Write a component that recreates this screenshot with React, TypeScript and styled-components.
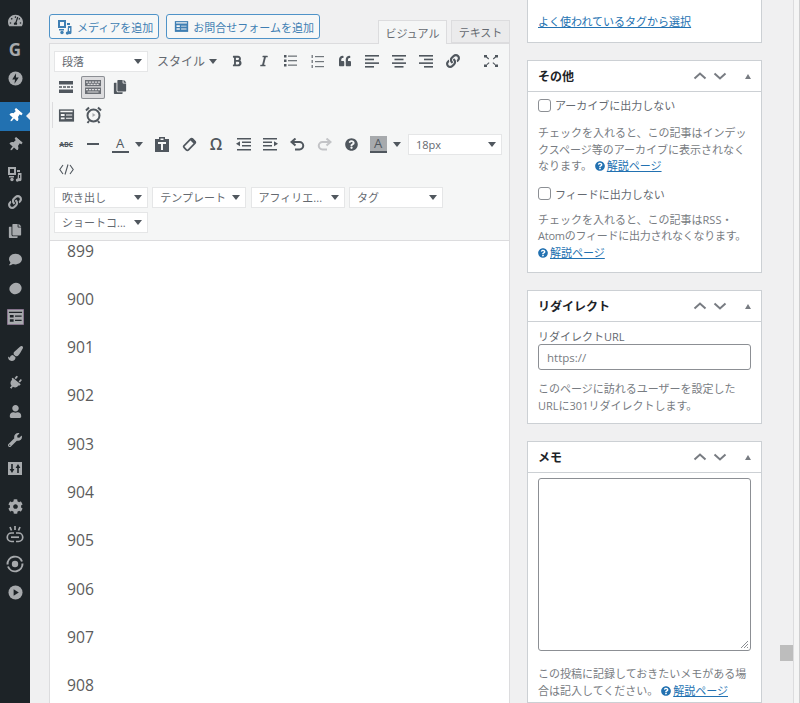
import React from 'react';
import styled, { createGlobalStyle } from 'styled-components';
import {
  FaTachometerAlt,
  FaThumbtack,
  FaLink,
  FaCopy,
  FaComment,
  FaPaintBrush,
  FaPlug,
  FaUser,
  FaWrench,
  FaCog,
  FaBold,
  FaItalic,
  FaQuoteLeft,
  FaQuestionCircle,
} from 'react-icons/fa';

const GlobalStyle = createGlobalStyle`
  html, body {
    margin: 0;
    height: 100%;
    overflow: hidden;
    background: #f0f0f1;
  }
  * {
    box-sizing: border-box;
  }
  body {
    font-family: "Open Sans", "Noto Sans CJK JP", sans-serif;
    font-size: 11px;
    color: #50575e;
  }
`;

const Page = styled.div`
  display: flex;
  height: 703px;
  overflow: hidden;
  position: relative;
`;

/* ---------- admin menu ---------- */

const Sidebar = styled.nav`
  flex: 0 0 30px;
  background: #1d2327;
  padding-top: 6.5px;
  color: #a7aaad;
`;

const MenuGroup = styled.div<{ $gap?: number }>`
  margin-top: ${p => p.$gap ?? 0}px;
`;

const MenuItem = styled.div<{ $active?: boolean }>`
  position: relative;
  height: 28.7px;
  display: flex;
  align-items: center;
  justify-content: center;
  background: ${p => (p.$active ? '#2271b1' : 'transparent')};
  color: ${p => (p.$active ? '#fff' : '#a7aaad')};
  font-size: 14px;

  ${p =>
    p.$active &&
    `
    &::after {
      content: '';
      position: absolute;
      right: 0;
      top: 10px;
      border: 4px solid transparent;
      border-right-color: #f0f0f1;
      border-left-width: 0;
    }
  `}
`;

const LogoLetter = styled.span`
  font-weight: 700;
  font-size: 17px;
  line-height: 1;
`;

const Tilted = styled.span`
  display: flex;
  transform: rotate(40deg);
`;

const MediaSvg = () => (
  <svg width="16" height="16" viewBox="0 0 16 16" fill="currentColor">
    <path d="M1 1h8v8H1zM3 3v4h4V3z" fillRule="evenodd" />
    <path d="M10 4h3v2h-3zM2 10h5v1.5H2z" />
    <path d="M11 7h3.5v6.5a1.6 1.6 0 1 1-1.4-1.5V9H12v5a1.6 1.6 0 1 1-1.4-1.5z" />
    <circle cx="5" cy="13.5" r="1.7" />
  </svg>
);

const BoltCircle = () => (
  <svg width="15" height="15" viewBox="0 0 16 16">
    <circle cx="8" cy="8" r="7.5" fill="currentColor" />
    <path d="M8.6 2.5 4.5 9h3l-.6 4.5L11.5 7h-3z" fill="#1d2327" />
  </svg>
);

const FormSvg = ({ size = 17 }: { size?: number }) => (
  <svg width={size} height={size} viewBox="0 0 18 18">
    <path d="M1 2.5h16v13H1z" fill="currentColor" />
    <path d="M2.5 4v1.5h13V4zM3 7.5v2h4v-2zM3 11v2h4v-2zM8.5 8v1h6.5V8zM8.5 11.5v1h6.5v-1z" fill="#f5f6f6" />
  </svg>
);

const MenuFormSvg = () => (
  <svg width="17" height="16" viewBox="0 0 18 17">
    <path d="M.5.5h17v16H.5z" fill="#a7aaad" stroke="#8a7590" />
    <path d="M2 3h14v1.2H2zM3 6.5h4V9H3zM3 11h4v2.5H3zM8.5 7h7v1.3h-7zM8.5 11.5h7v1.3h-7z" fill="#1d2327" />
  </svg>
);

const SlidersSvg = () => (
  <svg width="14" height="13" viewBox="0 0 14 13">
    <path d="M0 0h14v13H0z" fill="#a7aaad" />
    <path d="M3.2 2v5H1.6L4 11l2.4-4H4.8V2zM9.2 11V6H7.6L10 2l2.4 4h-1.6v5z" fill="#1d2327" />
  </svg>
);

const CouponSvg = () => (
  <svg width="18" height="20" viewBox="0 0 18 20" fill="none" stroke="currentColor" strokeWidth="1.7">
    <path d="M9 1v4M4 2l1.5 3.5M14 2l-1.5 3.5" />
    <path d="M8 8H5.5a4.2 4.2 0 0 0 0 8.5H8M10 8h2.5a4.2 4.2 0 0 1 0 8.5H10" />
    <path d="M5 12.2h8" />
  </svg>
);

const SwirlSvg = () => (
  <svg width="18" height="18" viewBox="0 0 18 18" fill="none" stroke="currentColor">
    <circle cx="9" cy="9" r="3.2" fill="currentColor" stroke="none" />
    <path d="M1.5 9.5A7.5 7.5 0 0 1 16 6.5" strokeWidth="2" />
    <path d="M16.5 8.5A7.5 7.5 0 0 1 2 11.5" strokeWidth="2" />
  </svg>
);

const PlaySvg = () => (
  <svg width="15" height="15" viewBox="0 0 16 16">
    <circle cx="8" cy="8" r="7.5" fill="currentColor" />
    <path d="M6 4.5v7L11.5 8z" fill="#1d2327" />
  </svg>
);

const menuGroups: { gap: number; items: { key: string; icon: React.ReactNode; active?: boolean }[] }[] = [
  {
    gap: 0,
    items: [
      { key: 'dash', icon: <FaTachometerAlt size={15} /> },
      { key: 'g', icon: <LogoLetter>G</LogoLetter> },
      { key: 'bolt', icon: <BoltCircle /> },
    ],
  },
  {
    gap: 9.5,
    items: [
      { key: 'posts', active: true, icon: <Tilted><FaThumbtack size={14} /></Tilted> },
      { key: 'pin', icon: <Tilted><FaThumbtack size={14} /></Tilted> },
      { key: 'media', icon: <MediaSvg /> },
      { key: 'link', icon: <FaLink size={14} /> },
      { key: 'pages', icon: <FaCopy size={14} /> },
      { key: 'comments', icon: <FaComment size={13} /> },
      {
        key: 'circle',
        icon: (
          <svg width="13" height="13" viewBox="0 0 13 13">
            <ellipse cx="6.5" cy="6.5" rx="6.2" ry="5.6" transform="rotate(-25 6.5 6.5)" fill="currentColor" />
          </svg>
        ),
      },
      { key: 'form', icon: <MenuFormSvg /> },
    ],
  },
  {
    gap: 8,
    items: [
      { key: 'brush', icon: <FaPaintBrush size={15} /> },
      { key: 'plug', icon: <Tilted><FaPlug size={14} /></Tilted> },
      { key: 'user', icon: <FaUser size={13} /> },
      { key: 'wrench', icon: <FaWrench size={14} /> },
      { key: 'sliders', icon: <SlidersSvg /> },
    ],
  },
  {
    gap: 9,
    items: [
      { key: 'cog', icon: <FaCog size={15} /> },
      { key: 'coupon', icon: <CouponSvg /> },
      { key: 'swirl', icon: <SwirlSvg /> },
      { key: 'play', icon: <PlaySvg /> },
    ],
  },
];

/* ---------- editor ---------- */

const EditorColumn = styled.main`
  flex: 0 0 461px;
  margin-left: 19px;
  display: flex;
  flex-direction: column;
`;

const EditorTop = styled.div`
  display: flex;
  align-items: flex-start;
  height: 43px;
  padding-top: 14px;
  gap: 7px;
`;

const MediaButton = styled.button`
  height: 25px;
  display: flex;
  align-items: center;
  gap: 4px;
  padding: 0 5px 0 7px;
  font: inherit;
  font-size: 11px;
  color: #3f7fb3;
  background: #f6f7f7;
  border: 1px solid #4f93c8;
  border-radius: 3px;
`;

const Tabs = styled.div`
  margin-left: auto;
  display: flex;
  align-items: flex-end;
  gap: 4px;
  height: 30px;
  margin-top: -1px;
`;

const Tab = styled.div<{ $active?: boolean }>`
  height: ${p => (p.$active ? 24 : 23)}px;
  width: ${p => (p.$active ? 69 : 59)}px;
  display: flex;
  align-items: center;
  justify-content: center;
  font-size: 11px;
  color: #646970;
  background: ${p => (p.$active ? '#f5f6f6' : '#ebebec')};
  border: 1px solid #dcdcde;
  border-bottom: ${p => (p.$active ? 'none' : '1px solid #dcdcde')};
  position: relative;
  z-index: 1;
  margin-bottom: ${p => (p.$active ? -1 : 0)}px;
`;

const Toolbar = styled.div`
  background: #f5f6f6;
  border: 1px solid #dcdcde;
  padding: 4px 5px 5px 2.5px;
`;

const ToolGroup = styled.div<{ $mt?: number; $rule?: boolean }>`
  margin-top: ${p => p.$mt ?? 0}px;
  ${p => p.$rule && 'box-shadow: -1px 0 0 #dcdcde;'}
`;

const ToolRow = styled.div<{ $h?: number; $gap?: number }>`
  display: flex;
  align-items: center;
  height: ${p => p.$h ?? 26}px;
  gap: ${p => p.$gap ?? 0}px;
`;

const ToolButton = styled.div<{ $pressed?: boolean; $disabled?: boolean; $end?: boolean }>`
  flex: 0 0 27px;
  height: 23px;
  display: flex;
  align-items: center;
  justify-content: center;
  color: ${p => (p.$disabled ? '#c3c4c7' : '#50575e')};
  border-radius: 2px;
  ${p => p.$end && 'margin-left: auto;'}
  ${p =>
    p.$pressed &&
    `
    background: #dcdcde;
    box-shadow: inset 0 0 0 1px #8c8f94;
    flex-basis: 24px;
    margin: 0 1.5px;
  `}
`;

const Caret = styled.span`
  width: 0;
  height: 0;
  border: 4px solid transparent;
  border-top: 5px solid #50575e;
  border-bottom: 0;
`;

const CaretButton = styled.div`
  flex: 0 0 15px;
  display: flex;
  align-items: center;
  justify-content: flex-start;
  padding-left: 1px;
`;

const Select = styled.div`
  flex: 0 0 94px;
  height: 21px;
  margin-left: 1.5px;
  display: flex;
  align-items: center;
  justify-content: space-between;
  padding: 0 5px 0 7px;
  background: #fff;
  border: 1px solid #e5e6e7;
  font-size: 11px;
  color: #646970;
  white-space: nowrap;
`;

const StyleMenu = styled.div`
  flex: 0 0 75px;
  display: flex;
  align-items: center;
  gap: 4px;
  padding-left: 9px;
  font-size: 12px;
  color: #646970;
`;

const Omega = styled.span`
  font-size: 16px;
  font-weight: 600;
  line-height: 1;
`;

const ColorA = styled.span<{ $fill?: boolean }>`
  width: 17px;
  height: 17px;
  display: flex;
  align-items: center;
  justify-content: center;
  font-size: 13px;
  line-height: 1;
  color: #50575e;
  background: ${p => (p.$fill ? '#a7aaad' : 'transparent')};
  border-bottom: 2px solid #50575e;
`;

const Abc = styled.span`
  font-size: 7px;
  font-weight: 700;
  letter-spacing: -0.2px;
  text-decoration: line-through;
`;

const Lines = ({ rows }: { rows: [number, number][] }) => (
  <svg width="14" height="13" viewBox="0 0 14 13" fill="currentColor">
    {rows.map(([x, w], i) => (
      <rect key={i} x={x} y={i * (11 / (rows.length - 1))} width={w} height="1.6" />
    ))}
  </svg>
);

const UlIcon = () => (
  <svg width="13" height="12" viewBox="0 0 13 12" fill="currentColor">
    {[0, 4.5, 9].map(y => (
      <g key={y}>
        <rect x="0" y={y} width="2.5" height="2.5" />
        <rect x="4" y={y + 0.5} width="9" height="1.3" opacity=".8" />
      </g>
    ))}
  </svg>
);

const OlIcon = () => (
  <svg width="13" height="13" viewBox="0 0 13 13" fill="currentColor">
    {[0, 5, 10].map(y => (
      <g key={y}>
        <rect x="0.5" y={y} width="1.5" height="3" opacity=".7" />
        <rect x="4" y={y + 1} width="9" height="1.2" opacity=".8" />
      </g>
    ))}
  </svg>
);

const FullscreenIcon = () => (
  <svg width="14" height="12" viewBox="0 0 14 12" fill="none" stroke="currentColor">
    <path d="M2.5 2 11.5 10M11.5 2 2.5 10" strokeWidth="1.1" strokeDasharray="3 5.5" />
    <path d="M0 0h3v2.5H0zM11 0h3v2.5h-3zM0 9.5h3V12H0zM11 9.5h3V12h-3z" fill="currentColor" stroke="none" />
  </svg>
);

const MoreIcon = () => (
  <svg width="14" height="12" viewBox="0 0 14 12" fill="currentColor">
    <path d="M0 0h14v3.5H0zM0 8.5h14V12H0zM0 5.3h3v1.4H0zM4 5.3h3v1.4H4zM8 5.3h3v1.4H8zM12 5.3h2v1.4h-2z" />
  </svg>
);

const KeyboardIcon = () => (
  <svg width="16" height="14" viewBox="0 0 16 14" fill="#6b6f75">
    <path d="M0 0h16v6.3H0zM0 7.5h16V14H0z" />
    <path
      d="M1 1.5h2.2v1.2H1zM4 1.5h2.2v1.2H4zM7 1.5h2.2v1.2H7zM10 1.5h2.2v1.2H10zM13 1.5h2v1.2h-2zM2.500 3.800h2.200V5H2.500zM5.500 3.800h2.200V5H5.500zM8.500 3.800h2.200V5H8.500zM11.500 3.800h2.200V5h-2.200zM1 9h2.200v1.200H1zM4 9h2.200v1.200H4zM7 9h2.200v1.200H7zM10 9h2.200v1.200H10zM13 9h2v1.200h-2zM2.500 11.400h11v1.200h-11z"
      fill="#dcdcde"
    />
  </svg>
);

const ClockIcon = () => (
  <svg width="17" height="18" viewBox="0 0 17 18" fill="none" stroke="currentColor">
    <circle cx="8.5" cy="9.5" r="6" strokeWidth="2" />
    <path d="M1 4.5 4 1.5M16 4.5l-3-3M4 15l-1.5 2M13 15l1.5 2" strokeWidth="2" />
    <path d="M7.5 7v4l3-2z" fill="#a7aaad" stroke="none" />
  </svg>
);

const ClipboardIcon = () => (
  <svg width="14" height="15" viewBox="0 0 14 15" fill="currentColor">
    <path d="M0 2h4V0h6v2h4v13H0zM5.5 1.5V3h3V1.5zM3 5v2h3v6h2V7h3V5z" fillRule="evenodd" />
  </svg>
);

const EraserIcon = () => (
  <svg width="15" height="15" viewBox="0 0 15 15" fill="none" stroke="currentColor">
    <rect x="1.5" y="4.5" width="12" height="6" rx="1.5" transform="rotate(-45 7.5 7.5)" strokeWidth="1.7" />
    <path d="M8 3 12 7l1.2-1.5a1 1 0 0 0 0-1.5L11 1.8a1 1 0 0 0-1.5 0z" fill="currentColor" stroke="none" />
  </svg>
);

const OutdentIcon = () => (
  <svg width="15" height="13" viewBox="0 0 15 13" fill="currentColor">
    <path d="M1 0h14v1.400H1zM6 3.500h9v1.400H6zM6 7h9v1.400H6zM1 11h14v1.400H1z" />
    <path d="M0 5.800 4 3.300v5z" />
  </svg>
);

const IndentIcon = () => (
  <svg width="15" height="13" viewBox="0 0 15 13" fill="currentColor">
    <path d="M0 0h14v1.400H0zM0 3.500h9v1.400H0zM0 7h9v1.400H0zM0 11h14v1.400H0z" />
    <path d="M15 5.800 11 3.300v5z" />
  </svg>
);

const UndoIcon = ({ flip }: { flip?: boolean }) => (
  <svg
    width="15"
    height="13"
    viewBox="0 0 15 13"
    fill="none"
    stroke="currentColor"
    strokeWidth="2"
    style={flip ? { transform: 'scaleX(-1)' } : undefined}
  >
    <path d="M2 4h7.5a3.7 3.7 0 0 1 0 7.5H5" />
    <path d="M5.5 .5 1.5 4l4 3.5" />
  </svg>
);

const CodeIcon = () => (
  <svg width="15" height="11" viewBox="0 0 15 11" fill="none" stroke="currentColor" strokeWidth="1.1">
    <path d="M4 1 .8 5.5 4 10M11 1l3.2 4.5L11 10M9 .5 6 10.5" />
  </svg>
);

const HelpDot = styled(FaQuestionCircle)`
  color: #2271b1;
  vertical-align: -1px;
`;

const EditorBody = styled.div`
  flex: 1;
  min-height: 0;
  overflow: hidden;
  background: #fff;
  border-left: 1px solid #dcdcde;
  border-right: 1px solid #dcdcde;
  padding-left: 17px;
`;

const Line = styled.p`
  margin: 0 0 21.33px;
  font-size: 15.7px;
  line-height: 27px;
  color: #5c5c5c;
  &:first-child {
    margin-top: -3px;
  }
`;

/* ---------- side boxes ---------- */

const SideColumn = styled.aside`
  flex: 0 0 235px;
  margin-left: 17px;
  display: flex;
  flex-direction: column;
  gap: 17px;
`;

const Box = styled.section<{ $grow?: boolean }>`
  background: #fff;
  border: 1px solid #ccd0d4;
  ${p => p.$grow && 'flex: 1;'}
`;

const TopBox = styled(Box)`
  height: 43px;
  border-top: none;
  padding: 13px 10px 0;
`;

const BoxHeader = styled.header`
  height: 31px;
  display: flex;
  align-items: center;
  padding: 0 10px;
  border-bottom: 1px solid #ccd0d4;
`;

const BoxTitle = styled.h2`
  margin: 0;
  flex: 1;
  font-size: 12px;
  font-weight: 700;
  color: #1d2327;
`;

const HeaderTools = styled.div`
  display: flex;
  align-items: center;
  color: #787c82;
`;

const ChevronSlot = styled.span`
  display: flex;
  margin-right: 6px;
`;

const SmallUp = styled.span`
  width: 0;
  height: 0;
  margin-left: 17.5px;
  margin-right: 0.5px;
  border: 3.5px solid transparent;
  border-bottom: 5px solid #787c82;
  border-top: 0;
`;

const Chevron = ({ down }: { down?: boolean }) => (
  <svg width="14" height="8" viewBox="0 0 14 8" fill="none" stroke="currentColor" strokeWidth="2">
    <path d={down ? 'M1.5 1.5 7 6.5l5.5-5' : 'M1.5 6.5 7 1.5l5.5 5'} />
  </svg>
);

const BoxBody = styled.div<{ $pt?: number; $pb?: number }>`
  padding: ${p => p.$pt ?? 6}px 10px ${p => p.$pb ?? 0}px;
`;

const CheckRow = styled.label<{ $mt?: number }>`
  display: flex;
  align-items: center;
  gap: 4px;
  height: 14px;
  margin-top: ${p => p.$mt ?? 0}px;
  font-size: 11px;
  color: #646970;
`;

const CheckBox = styled.span`
  flex: 0 0 13px;
  height: 13px;
  border: 1px solid #8c8f94;
  border-radius: 3px;
  background: #fff;
`;

const Note = styled.p<{ $mt?: number }>`
  margin: ${p => p.$mt ?? 0}px 0 0;
  font-size: 11px;
  line-height: 16.5px;
  color: #787c82;
`;

const TightLine = styled.span`
  white-space: nowrap;
  letter-spacing: -0.25px;
`;

const DocLink = styled.a`
  color: #2271b1;
  text-decoration: underline;
`;

const HelpText = styled(DocLink)`
  padding-left: 2px;
`;

const FieldLabel = styled.div`
  font-size: 11px;
  line-height: 14px;
  color: #646970;
`;

const TextField = styled.div`
  height: 26px;
  display: flex;
  align-items: center;
  padding-left: 8px;
  font-size: 11.5px;
  color: #787c82;
  border: 1px solid #8c8f94;
  border-radius: 3px;
`;

const MemoField = styled.div`
  position: relative;
  height: 173px;
  width: 213px;
  border: 1px solid #8c8f94;
  border-radius: 3px;
`;

const ResizeGrip = styled.svg`
  position: absolute;
  right: 1px;
  bottom: 1px;
`;

const ScrollRail = styled.div`
  flex: 1;
  position: relative;
  display: flex;
  justify-content: flex-end;
`;

const RailEdge = styled.div`
  width: 7px;
  background: #f5f5f5;
  border-left: 1px solid #dcdcde;
  border-right: 1px solid #cfcfd0;
`;

const RailThumb = styled.div`
  position: absolute;
  top: 645px;
  left: 18px;
  width: 13px;
  height: 16px;
  background: #bdbdbd;
`;

const HelpLink = () => (
  <>
    <HelpDot size={10} />
    <HelpText href="#">解説ページ</HelpText>
  </>
);

const BoxHead = ({ title }: { title: string }) => (
  <BoxHeader>
    <BoxTitle>{title}</BoxTitle>
    <HeaderTools>
      <ChevronSlot><Chevron /></ChevronSlot>
      <Chevron down />
      <SmallUp />
    </HeaderTools>
  </BoxHeader>
);

const numbers = [899, 900, 901, 902, 903, 904, 905, 906, 907, 908];

const App: React.FC = () => (
  <Page>
    <GlobalStyle />
    <Sidebar>
      {menuGroups.map(group => (
        <MenuGroup key={group.items[0].key} $gap={group.gap}>
          {group.items.map(item => (
            <MenuItem key={item.key} $active={item.active}>
              {item.icon}
            </MenuItem>
          ))}
        </MenuGroup>
      ))}
    </Sidebar>

    <EditorColumn>
      <EditorTop>
        <MediaButton>
          <MediaSvg />
          メディアを追加
        </MediaButton>
        <MediaButton>
          <FormSvg size={15} />
          お問合せフォームを追加
        </MediaButton>
        <Tabs>
          <Tab $active>ビジュアル</Tab>
          <Tab>テキスト</Tab>
        </Tabs>
      </EditorTop>

      <Toolbar>
        <ToolGroup>
          <ToolRow>
            <Select>段落<Caret /></Select>
            <StyleMenu>スタイル<Caret /></StyleMenu>
            <ToolButton><FaBold size={12} /></ToolButton>
            <ToolButton><FaItalic size={12} /></ToolButton>
            <ToolButton><UlIcon /></ToolButton>
            <ToolButton><OlIcon /></ToolButton>
            <ToolButton><FaQuoteLeft size={12} /></ToolButton>
            <ToolButton><Lines rows={[[0, 14], [0, 9], [0, 14], [0, 9]]} /></ToolButton>
            <ToolButton><Lines rows={[[0, 14], [2.5, 9], [0, 14], [2.5, 9]]} /></ToolButton>
            <ToolButton><Lines rows={[[0, 14], [5, 9], [0, 14], [5, 9]]} /></ToolButton>
            <ToolButton><FaLink size={14} /></ToolButton>
            <ToolButton $end><FullscreenIcon /></ToolButton>
          </ToolRow>
          <ToolRow>
            <ToolButton><MoreIcon /></ToolButton>
            <ToolButton $pressed><KeyboardIcon /></ToolButton>
            <ToolButton><FaCopy size={14} /></ToolButton>
          </ToolRow>
        </ToolGroup>

        <ToolGroup $mt={2} $rule>
          <ToolRow>
            <ToolButton><FormSvg /></ToolButton>
            <ToolButton><ClockIcon /></ToolButton>
          </ToolRow>
        </ToolGroup>

        <ToolGroup $mt={3.5}>
          <ToolRow $h={25}>
            <ToolButton><Abc>ABC</Abc></ToolButton>
            <ToolButton><svg width="12" height="2"><rect width="12" height="2" fill="currentColor" /></svg></ToolButton>
            <ToolButton><ColorA>A</ColorA></ToolButton>
            <CaretButton><Caret /></CaretButton>
            <ToolButton><ClipboardIcon /></ToolButton>
            <ToolButton><EraserIcon /></ToolButton>
            <ToolButton><Omega>Ω</Omega></ToolButton>
            <ToolButton><OutdentIcon /></ToolButton>
            <ToolButton><IndentIcon /></ToolButton>
            <ToolButton><UndoIcon /></ToolButton>
            <ToolButton $disabled><UndoIcon flip /></ToolButton>
            <ToolButton><FaQuestionCircle size={13} /></ToolButton>
            <ToolButton><ColorA $fill>A</ColorA></ToolButton>
            <CaretButton><Caret /></CaretButton>
            <Select>18px<Caret /></Select>
          </ToolRow>
          <ToolRow $h={25}>
            <ToolButton><CodeIcon /></ToolButton>
          </ToolRow>
        </ToolGroup>

        <ToolGroup $mt={3}>
          <ToolRow $h={25} $gap={2.8}>
            <Select>吹き出し<Caret /></Select>
            <Select>テンプレート<Caret /></Select>
            <Select>アフィリエ...<Caret /></Select>
            <Select>タグ<Caret /></Select>
          </ToolRow>
          <ToolRow $h={25}>
            <Select>ショートコ...<Caret /></Select>
          </ToolRow>
        </ToolGroup>
      </Toolbar>

      <EditorBody>
        {numbers.map(n => (
          <Line key={n}>{n}</Line>
        ))}
      </EditorBody>
    </EditorColumn>

    <SideColumn>
      <TopBox>
        <DocLink href="#">よく使われているタグから選択</DocLink>
      </TopBox>

      <Box>
        <BoxHead title="その他" />
        <BoxBody $pb={11}>
          <CheckRow><CheckBox />アーカイブに出力しない</CheckRow>
          <Note $mt={13}>
            チェックを入れると、この記事はインデックスページ等のアーカイブに表示されなくなります。 <HelpLink />
          </Note>
          <CheckRow $mt={12}><CheckBox />フィードに出力しない</CheckRow>
          <Note $mt={11}>
            チェックを入れると、この記事はRSS・
            <br />
            <TightLine>Atomのフィードに出力されなくなります。</TightLine>
            <br />
            <HelpLink />
          </Note>
        </BoxBody>
      </Box>

      <Box>
        <BoxHead title="リダイレクト" />
        <BoxBody $pt={8} $pb={9}>
          <FieldLabel>リダイレクトURL</FieldLabel>
          <TextField>https://</TextField>
          <Note $mt={11}>
            このページに訪れるユーザーを設定したURLに301リダイレクトします。
          </Note>
        </BoxBody>
      </Box>

      <Box $grow>
        <BoxHead title="メモ" />
        <BoxBody $pt={5}>
          <MemoField>
            <ResizeGrip width="10" height="10" viewBox="0 0 10 10" stroke="#8c8f94">
              <path d="M9 2 2 9M9 5 5 9M9 8 8 9" />
            </ResizeGrip>
          </MemoField>
          <Note $mt={15}>
            この投稿に記録しておきたいメモがある場合は記入してください。 <HelpLink />
          </Note>
        </BoxBody>
      </Box>
    </SideColumn>

    <ScrollRail>
      <RailEdge />
      <RailThumb />
    </ScrollRail>
  </Page>
);

export default App;
